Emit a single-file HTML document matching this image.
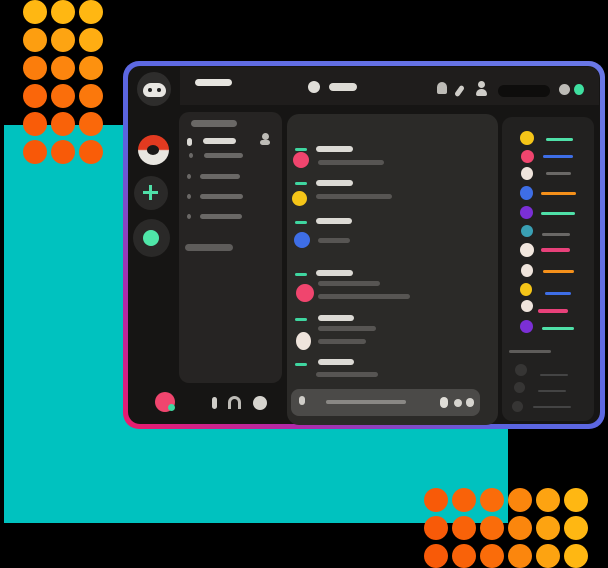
<!DOCTYPE html>
<html><head><style>
html,body{margin:0;padding:0;background:#000;width:608px;height:568px;overflow:hidden;position:relative;font-family:"Liberation Sans",sans-serif}
div{position:absolute;box-sizing:border-box}
.d{width:24px;height:24px;border-radius:50%}
.b{border-radius:4px}
.c{border-radius:50%}
</style></head><body>
<!-- teal -->
<div style="left:4px;top:125px;width:504px;height:398px;background:#00c2bf"></div>
<!-- top-left dots -->
<div style="left:23px;top:0;width:80px;height:166px">
<div class="d" style="left:0;top:0;background:#ffb712"></div><div class="d" style="left:28px;top:0;background:#ffb712"></div><div class="d" style="left:56px;top:0;background:#ffb712"></div>
<div class="d" style="left:0;top:28px;background:#fd9e10"></div><div class="d" style="left:28px;top:28px;background:#fda412"></div><div class="d" style="left:56px;top:28px;background:#ffad12"></div>
<div class="d" style="left:0;top:56px;background:#fb7d0c"></div><div class="d" style="left:28px;top:56px;background:#fc850e"></div><div class="d" style="left:56px;top:56px;background:#fd910f"></div>
<div class="d" style="left:0;top:84px;background:#fa660a"></div><div class="d" style="left:28px;top:84px;background:#fa6e0b"></div><div class="d" style="left:56px;top:84px;background:#fb780c"></div>
<div class="d" style="left:0;top:112px;background:#f95c08"></div><div class="d" style="left:28px;top:112px;background:#f96209"></div><div class="d" style="left:56px;top:112px;background:#fa680a"></div>
<div class="d" style="left:0;top:140px;background:#f85808"></div><div class="d" style="left:28px;top:140px;background:#f85a08"></div><div class="d" style="left:56px;top:140px;background:#f95d08"></div>
</div>
<!-- bottom-right dots -->
<div style="left:424px;top:488px;width:170px;height:80px">
<div class="d" style="left:0;top:0;background:#f85a08"></div><div class="d" style="left:28px;top:0;background:#f96209"></div><div class="d" style="left:56px;top:0;background:#fa6c0a"></div><div class="d" style="left:84px;top:0;background:#fb860d"></div><div class="d" style="left:112px;top:0;background:#fda311"></div><div class="d" style="left:140px;top:0;background:#ffb712"></div>
<div class="d" style="left:0;top:28px;background:#f85a08"></div><div class="d" style="left:28px;top:28px;background:#f96209"></div><div class="d" style="left:56px;top:28px;background:#fa6c0a"></div><div class="d" style="left:84px;top:28px;background:#fb860d"></div><div class="d" style="left:112px;top:28px;background:#fda311"></div><div class="d" style="left:140px;top:28px;background:#ffb712"></div>
<div class="d" style="left:0;top:56px;background:#f85a08"></div><div class="d" style="left:28px;top:56px;background:#f96209"></div><div class="d" style="left:56px;top:56px;background:#fa6c0a"></div><div class="d" style="left:84px;top:56px;background:#fb860d"></div><div class="d" style="left:112px;top:56px;background:#fda311"></div><div class="d" style="left:140px;top:56px;background:#ffb712"></div>
</div>
<!-- window frame -->
<div style="left:123px;top:61px;width:482px;height:368px;border-radius:16px;background:linear-gradient(to top right,#ec1a6a 0%,#b02aa8 18%,#5a64e0 40%,#6a78e6 100%)"></div>
<div style="left:128px;top:66px;width:472px;height:358px;border-radius:12px;background:#161514"></div>
<!-- header -->
<div style="left:180px;top:67px;width:419px;height:38px;background:#1f1d1c;border-radius:0 10px 0 0"></div>
<div class="b" style="left:195px;top:79px;width:37px;height:7px;background:#e6e4df"></div>
<div class="c" style="left:308px;top:81px;width:12px;height:12px;background:#e0ded8"></div>
<div class="b" style="left:329px;top:83px;width:28px;height:8px;background:#dddbd5"></div>
<div style="left:437px;top:82px;width:10px;height:12px;border-radius:5px 5px 2px 2px;background:#bdbbb6"></div>
<div style="left:457px;top:85px;width:5px;height:12px;border-radius:3px;background:#cfcdc8;transform:rotate(35deg)"></div>
<div class="c" style="left:478px;top:81px;width:7px;height:7px;background:#cfcdc8"></div>
<div style="left:476px;top:89px;width:11px;height:7px;border-radius:5px 5px 2px 2px;background:#cfcdc8"></div>
<div style="left:498px;top:85px;width:52px;height:12px;border-radius:6px;background:#0e0d0c"></div>
<div class="c" style="left:559px;top:84px;width:11px;height:11px;background:#bdbbb6"></div>
<div class="c" style="left:574px;top:84px;width:10px;height:11px;background:#3fe0a0"></div>
<!-- server column -->
<div class="c" style="left:137px;top:72px;width:34px;height:34px;background:#2e2d2c"></div>
<div style="left:143px;top:83px;width:23px;height:14px;border-radius:8px 8px 6px 6px;background:#e8e6e2"></div>
<div class="c" style="left:148px;top:88px;width:4px;height:4px;background:#222"></div>
<div class="c" style="left:157px;top:88px;width:4px;height:4px;background:#222"></div>
<div style="left:138px;top:135px;width:31px;height:30px;border-radius:50%;background:linear-gradient(#e23a20 0 48%,#e8e6e0 52% 100%)"></div>
<div class="c" style="left:147px;top:145px;width:12px;height:10px;background:#1a1918"></div>
<div class="c" style="left:134px;top:176px;width:34px;height:34px;background:#2a2928"></div>
<div style="left:149px;top:185px;width:3px;height:15px;background:#4fe0a8"></div>
<div style="left:143px;top:191px;width:15px;height:3px;background:#4fe0a8"></div>
<div class="c" style="left:133px;top:219px;width:37px;height:38px;background:#2a2928"></div>
<div class="c" style="left:143px;top:230px;width:16px;height:16px;background:#4fe6a8"></div>
<!-- channels panel -->
<div style="left:179px;top:112px;width:103px;height:271px;border-radius:10px;background:#262423"></div>
<div class="b" style="left:191px;top:120px;width:46px;height:7px;background:#6a6866"></div>
<div class="b" style="left:187px;top:138px;width:5px;height:8px;background:#dcdad5"></div>
<div class="b" style="left:203px;top:138px;width:33px;height:6px;background:#dcdad5"></div>
<div class="c" style="left:262px;top:133px;width:7px;height:7px;background:#bdbbb6"></div>
<div style="left:260px;top:140px;width:10px;height:5px;border-radius:4px;background:#bdbbb6"></div>
<div class="b" style="left:204px;top:153px;width:39px;height:5px;background:#6a6866"></div>
<div class="b" style="left:200px;top:174px;width:40px;height:5px;background:#6a6866"></div>
<div class="b" style="left:200px;top:194px;width:43px;height:5px;background:#6a6866"></div>
<div class="b" style="left:200px;top:214px;width:42px;height:5px;background:#6a6866"></div>
<div class="c" style="left:189px;top:153px;width:4px;height:5px;background:#6a6866"></div>
<div class="c" style="left:187px;top:174px;width:4px;height:5px;background:#6a6866"></div>
<div class="c" style="left:187px;top:194px;width:4px;height:5px;background:#6a6866"></div>
<div class="c" style="left:187px;top:214px;width:4px;height:5px;background:#6a6866"></div>
<div class="b" style="left:185px;top:244px;width:48px;height:7px;background:#5e5c5a"></div>
<!-- user bar -->
<div class="c" style="left:155px;top:392px;width:20px;height:20px;background:#f0456e"></div>
<div class="c" style="left:168px;top:404px;width:7px;height:7px;background:#3fd6a0"></div>
<div class="b" style="left:212px;top:397px;width:5px;height:12px;background:#cfcdc8"></div>
<div style="left:228px;top:396px;width:13px;height:13px;border:3px solid #bdbbb6;border-bottom:none;border-radius:7px 7px 0 0"></div>
<div class="c" style="left:253px;top:396px;width:14px;height:14px;background:#d6d4cf"></div>
<!-- chat -->
<div style="left:287px;top:114px;width:211px;height:311px;border-radius:12px;background:#2b2a28"></div>
<div style="left:291px;top:389px;width:189px;height:27px;border-radius:8px;background:#4b4a48"></div>
<div class="b" style="left:299px;top:396px;width:6px;height:9px;background:#cfcdc8"></div>
<div class="b" style="left:326px;top:400px;width:80px;height:4px;background:#8a8885"></div>
<div class="b" style="left:440px;top:397px;width:8px;height:11px;background:#e0ded8"></div>
<div class="b" style="left:454px;top:399px;width:8px;height:8px;background:#d6d4cf"></div>
<div class="b" style="left:466px;top:398px;width:8px;height:9px;background:#d6d4cf"></div>
<!-- messages -->
<div class="b" style="left:295px;top:148px;width:12px;height:3px;background:#3fd6a0"></div>
<div class="b" style="left:316px;top:146px;width:37px;height:6px;background:#dcdad5"></div>
<div class="c" style="left:293px;top:152px;width:16px;height:16px;background:#f0456e"></div>
<div class="b" style="left:318px;top:160px;width:66px;height:5px;background:#575553"></div>
<div class="b" style="left:295px;top:182px;width:12px;height:3px;background:#3fd6a0"></div>
<div class="b" style="left:316px;top:180px;width:37px;height:6px;background:#dcdad5"></div>
<div class="c" style="left:292px;top:191px;width:15px;height:15px;background:#f5c518"></div>
<div class="b" style="left:316px;top:194px;width:76px;height:5px;background:#575553"></div>
<div class="b" style="left:295px;top:221px;width:12px;height:3px;background:#3fd6a0"></div>
<div class="b" style="left:316px;top:218px;width:36px;height:6px;background:#dcdad5"></div>
<div class="c" style="left:294px;top:232px;width:16px;height:16px;background:#3e6ee6"></div>
<div class="b" style="left:318px;top:238px;width:32px;height:5px;background:#575553"></div>
<div class="b" style="left:295px;top:273px;width:12px;height:3px;background:#3fd6a0"></div>
<div class="b" style="left:316px;top:270px;width:37px;height:6px;background:#dcdad5"></div>
<div class="c" style="left:296px;top:284px;width:18px;height:18px;background:#f0456e"></div>
<div class="b" style="left:318px;top:281px;width:62px;height:5px;background:#575553"></div>
<div class="b" style="left:318px;top:294px;width:92px;height:5px;background:#575553"></div>
<div class="b" style="left:295px;top:318px;width:12px;height:3px;background:#3fd6a0"></div>
<div class="b" style="left:318px;top:315px;width:36px;height:6px;background:#dcdad5"></div>
<div class="c" style="left:296px;top:332px;width:15px;height:18px;background:#efe4dc"></div>
<div class="b" style="left:318px;top:326px;width:58px;height:5px;background:#575553"></div>
<div class="b" style="left:318px;top:339px;width:48px;height:5px;background:#575553"></div>
<div class="b" style="left:295px;top:363px;width:12px;height:3px;background:#3fd6a0"></div>
<div class="b" style="left:318px;top:359px;width:36px;height:6px;background:#dcdad5"></div>
<div class="b" style="left:316px;top:372px;width:62px;height:5px;background:#575553"></div>
<!-- members -->
<div style="left:502px;top:117px;width:92px;height:304px;border-radius:10px;background:#222120"></div>
<div class="c" style="left:520px;top:131px;width:14px;height:14px;background:#f5c518"></div><div class="b" style="left:546px;top:138px;width:27px;height:3px;background:#4fe0a8"></div>
<div class="c" style="left:521px;top:150px;width:13px;height:13px;background:#f0456e"></div><div class="b" style="left:543px;top:155px;width:30px;height:3px;background:#3e6ee6"></div>
<div class="c" style="left:521px;top:167px;width:12px;height:13px;background:#efe4dc"></div><div class="b" style="left:546px;top:172px;width:25px;height:3px;background:#6a6866"></div>
<div class="c" style="left:520px;top:186px;width:13px;height:14px;background:#3e6ee6"></div><div class="b" style="left:541px;top:192px;width:35px;height:3px;background:#f5901a"></div>
<div class="c" style="left:520px;top:206px;width:13px;height:13px;background:#7b2fd6"></div><div class="b" style="left:541px;top:212px;width:34px;height:3px;background:#4fe0a8"></div>
<div class="c" style="left:521px;top:225px;width:12px;height:12px;background:#3aa0b4"></div><div class="b" style="left:542px;top:233px;width:28px;height:3px;background:#6a6866"></div>
<div class="c" style="left:520px;top:243px;width:14px;height:14px;background:#f2e7de"></div><div class="b" style="left:541px;top:248px;width:29px;height:4px;background:#e8417a"></div>
<div class="c" style="left:521px;top:264px;width:12px;height:13px;background:#efe4dc"></div><div class="b" style="left:543px;top:270px;width:31px;height:3px;background:#f5901a"></div>
<div class="c" style="left:520px;top:283px;width:12px;height:13px;background:#f5c518"></div><div class="b" style="left:545px;top:292px;width:26px;height:3px;background:#3e6ee6"></div>
<div class="c" style="left:521px;top:300px;width:12px;height:12px;background:#efe4dc"></div><div class="b" style="left:538px;top:309px;width:30px;height:4px;background:#e8417a"></div>
<div class="c" style="left:520px;top:320px;width:13px;height:13px;background:#7b2fd6"></div><div class="b" style="left:542px;top:327px;width:32px;height:3px;background:#4fe0a8"></div>
<div class="b" style="left:509px;top:350px;width:42px;height:3px;background:#5e5c5a"></div>
<div class="c" style="left:515px;top:364px;width:12px;height:12px;background:#363534"></div><div class="b" style="left:540px;top:374px;width:28px;height:2px;background:#444"></div>
<div class="c" style="left:514px;top:382px;width:11px;height:11px;background:#363534"></div><div class="b" style="left:538px;top:390px;width:28px;height:2px;background:#444"></div>
<div class="c" style="left:512px;top:401px;width:11px;height:11px;background:#363534"></div><div class="b" style="left:533px;top:406px;width:38px;height:2px;background:#444"></div>
</body></html>
